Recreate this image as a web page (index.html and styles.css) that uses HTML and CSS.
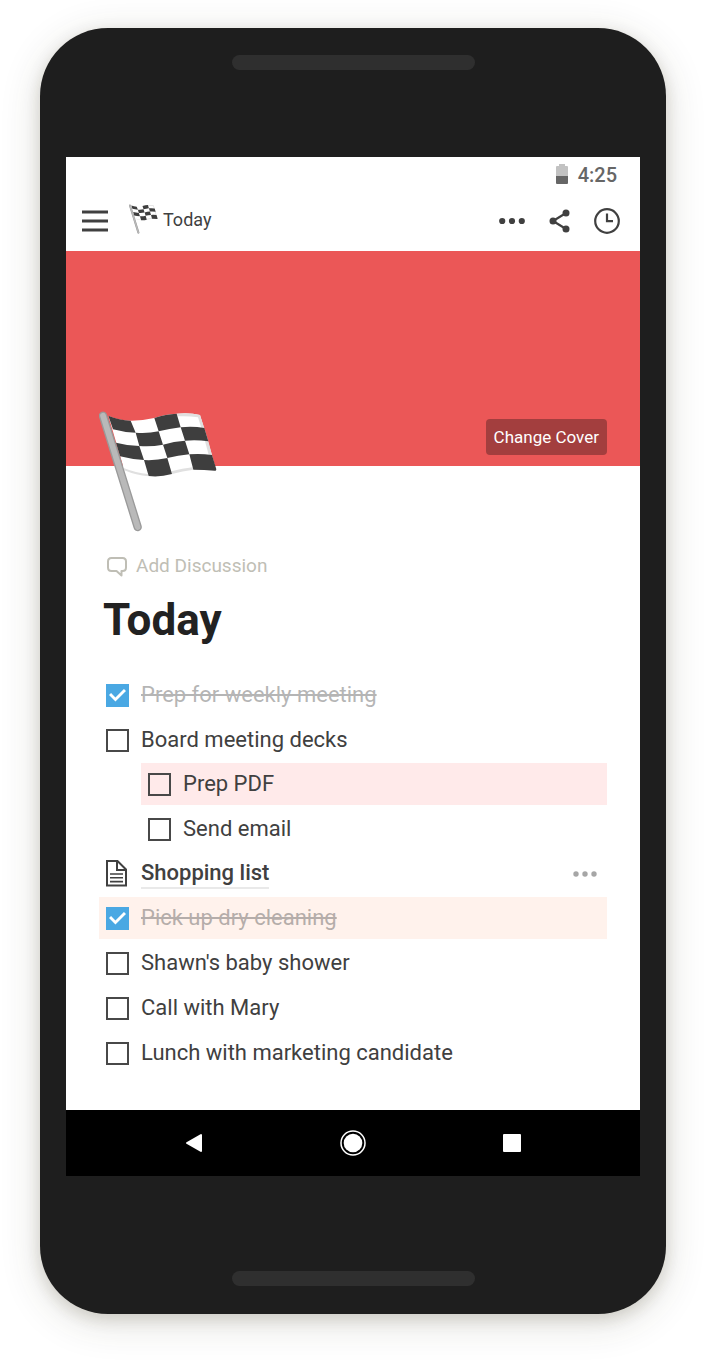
FILE: index.html
```html
<!DOCTYPE html>
<html lang="en">
<head>
<meta charset="utf-8">
<meta name="viewport" content="width=device-width, initial-scale=1">
<title>Today</title>
<link rel="stylesheet" href="styles.css">
</head>
<body>
<svg class="sprite" aria-hidden="true">
  <symbol id="flag" viewBox="39 30 357 366">
    <path fill="#fff" d="M67 47Q100 62 137 62Q170 62 205 54Q240 42 272 41Q312 37 342 45Q374 150 391 212Q355 207 322 209Q290 213 258 222Q222 232 188 228Q150 224 115 211Z"/>
    <path fill="#e0e0e0" d="M272 41Q312 37 342 45L355 84L346 84L336 52Q305 47 275 49ZM355 84L367 124L378 165L368 164L357 124ZM113 204Q150 219 186 222L188 229Q150 226 115 211ZM256 214Q290 205 320 202L322 209Q290 213 258 222Z"/>
    <g fill="#3e3e3e">
      <path d="M67 47Q100 60 134 62L149 98Q112 97 81 88Z"/>
      <path d="M205 54Q240 42 272 41L284 82Q250 86 218 94Z"/>
      <path d="M149 98Q184 101 218 94L231 134Q195 141 160 138Z"/>
      <path d="M284 82Q320 78 355 84L367 124Q330 118 297 122Z"/>
      <path d="M90 128Q124 137 160 138L174 180Q136 178 102 169Z"/>
      <path d="M231 134Q264 124 297 122L310 163Q276 166 244 174Z"/>
      <path d="M174 180Q210 182 244 174L258 222Q222 232 188 228Z"/>
      <path d="M310 163Q344 160 378 165L391 208Q390 214 386 212Q355 209 322 209Z"/>
    </g>
    <path fill="none" stroke="#9a9a9a" stroke-width="25" stroke-linecap="round" d="M51 47L155 381"/>
    <path fill="none" stroke="#b9b9b9" stroke-width="17" stroke-linecap="round" d="M51 47L155 381"/>
  </symbol>
</svg>
<main class="phone">
  <div class="speaker"></div>
  <div class="screen">
    <div class="status">
      <svg width="12" height="21" viewBox="0 0 12 21" aria-hidden="true"><path fill="#c2c2c2" d="M3 0H9V2H11Q12 2 12 3V12H0V3Q0 2 1 2H3Z"/><path fill="#666" d="M0 12H12V19Q12 20 11 20H1Q0 20 0 19Z"/></svg>
      <time>4:25</time>
    </div>
    <header class="topbar">
      <button class="icon-button" aria-label="Menu"><svg width="26" height="22" viewBox="0 0 26 22"><path stroke="#404040" stroke-width="2.8" d="M0 2H26M0 11H26M0 20H26"/></svg></button>
      <div class="crumb"><svg class="crumb-flag" aria-hidden="true"><use href="#flag"/></svg><span class="crumb-text">Today</span></div>
      <div class="actions">
        <button class="icon-button" aria-label="More"><svg width="26" height="8" viewBox="0 0 26 8" fill="#404040"><circle cx="3.2" cy="4" r="3.1"/><circle cx="13" cy="4" r="3.1"/><circle cx="22.8" cy="4" r="3.1"/></svg></button>
        <button class="icon-button" aria-label="Share"><svg width="21" height="24" viewBox="0 0 21 24" fill="#404040"><path fill="none" stroke="#404040" stroke-width="2.2" d="M17 4L4 12L17 20"/><circle cx="17" cy="4" r="3.5"/><circle cx="4" cy="12" r="3.5"/><circle cx="17" cy="20" r="3.5"/></svg></button>
        <button class="icon-button" aria-label="Updates"><svg width="26" height="26" viewBox="0 0 26 26" fill="none" stroke="#404040" stroke-width="2.2"><circle cx="13" cy="13" r="11.8"/><path d="M13 5.5V13.2H19"/></svg></button>
      </div>
    </header>
    <div class="cover"><button class="change-cover">Change Cover</button></div>
    <article class="page">
      <svg class="page-flag" aria-hidden="true"><use href="#flag"/></svg>
      <button class="discussion"><svg width="22" height="22" viewBox="0 0 22 22" fill="none" stroke="#bfbeb5" stroke-width="2" stroke-linejoin="round" aria-hidden="true"><path d="M5.500 3H16.500Q20 3 20 6.500V12.500Q20 16 16.500 16H15.500V20.500L10.500 16H5.500Q2 16 2 12.500V6.500Q2 3 5.500 3Z"/></svg>Add Discussion</button>
      <h1 class="title">Today</h1>
      <ul class="list">
        <li><label class="row"><input type="checkbox" class="box" checked><span class="text">Prep for weekly meeting</span></label></li>
        <li><label class="row"><input type="checkbox" class="box"><span class="text">Board meeting decks</span></label>
          <ul class="list nested">
            <li><label class="row pink"><input type="checkbox" class="box"><span class="text">Prep PDF</span></label></li>
            <li><label class="row"><input type="checkbox" class="box"><span class="text">Send email</span></label></li>
          </ul>
        </li>
        <li class="row page-row">
          <svg width="23" height="27" viewBox="0 0 23 27" fill="none" stroke="#404040" stroke-width="2" aria-hidden="true"><path d="M1 1H11.500L20 9.500V25.500H1Z"/><path d="M11 1V10H20"/><path stroke-width="1.600" d="M4 14H17M4 17.800H17M4 21.600H17"/></svg>
          <a class="page-link" href="#shopping">Shopping list</a>
          <button class="icon-button row-more" aria-label="Shopping list options"><svg width="24" height="6" viewBox="0 0 24 6" fill="#a6a6a6"><circle cx="3" cy="3" r="2.700"/><circle cx="12" cy="3" r="2.700"/><circle cx="21" cy="3" r="2.700"/></svg></button>
        </li>
        <li><label class="row peach"><input type="checkbox" class="box" checked><span class="text">Pick up dry cleaning</span></label></li>
        <li><label class="row"><input type="checkbox" class="box"><span class="text">Shawn's baby shower</span></label></li>
        <li><label class="row"><input type="checkbox" class="box"><span class="text">Call with Mary</span></label></li>
        <li><label class="row"><input type="checkbox" class="box"><span class="text">Lunch with marketing candidate</span></label></li>
      </ul>
    </article>
    <nav class="navbar">
      <button class="icon-button" aria-label="Back"><svg width="18" height="20" viewBox="0 0 18 20"><path fill="#fff" stroke="#fff" stroke-linejoin="round" stroke-width="2" d="M16 2V18L2 10Z"/></svg></button>
      <button class="icon-button" aria-label="Home"><svg width="26" height="26" viewBox="0 0 26 26"><circle cx="13" cy="13" r="12" fill="none" stroke="#fff" stroke-width="1.500"/><circle cx="13" cy="13" r="9.300" fill="#fff"/></svg></button>
      <button class="icon-button" aria-label="Recent apps"><svg width="18" height="18" viewBox="0 0 18 18"><rect width="18" height="18" rx="1" fill="#fff"/></svg></button>
    </nav>
  </div>
  <div class="speaker"></div>
</main>
</body>
</html>
```

FILE: styles.css
```css
* { box-sizing: border-box; }
body {
  margin: 0;
  padding: 28px 40px 52px;
  background: #fff;
  color: #404040;
  font-family: Roboto, "Liberation Sans", sans-serif;
}
svg { display: block; flex: none; }
button { font: inherit; cursor: pointer; }
.sprite { display: none; }
.phone {
  display: flex;
  flex-direction: column;
  align-items: center;
  padding: 27px 26px 28px;
  border-radius: 68px;
  background: #1e1e1e;
  box-shadow: 0 8px 40px rgba(55, 53, 30, 0.16), 0 5px 16px rgba(55, 45, 15, 0.16);
}
.speaker {
  width: 243px;
  max-width: 60%;
  height: 15px;
  border-radius: 8px;
  background: #2f2f2f;
}
.screen {
  align-self: stretch;
  margin: 87px 0 95px;
  background: #fff;
}
.icon-button {
  display: flex;
  padding: 0;
  border: 0;
  background: none;
}
.status {
  display: flex;
  justify-content: flex-end;
  align-items: center;
  gap: 10px;
  height: 35px;
  padding: 0 23px;
  color: #666;
  font-size: 20px;
  font-weight: 500;
}
.topbar {
  display: flex;
  align-items: center;
  height: 59px;
  padding: 0 20px 2px 16px;
}
.crumb {
  display: flex;
  align-items: center;
  gap: 5px;
  margin-left: 21px;
  padding-bottom: 3px;
  font-size: 18px;
}
.crumb-flag { width: 29px; height: 30px; }
.actions {
  display: flex;
  align-items: center;
  gap: 24px;
  margin-left: auto;
}
.cover {
  display: flex;
  justify-content: flex-end;
  align-items: flex-end;
  height: 215px;
  padding: 11px 33px;
  background: #eb5757;
}
.change-cover {
  padding: 8px;
  border: 0;
  border-radius: 4px;
  background: #a33e3e;
  color: #fff;
  font-size: 17px;
  line-height: 20px;
}
.page { padding: 0 33px 36px; }
.page-flag {
  position: relative;
  width: 119px;
  height: 122px;
  margin-top: -56px;
}
.discussion {
  display: flex;
  align-items: center;
  gap: 8px;
  margin-top: 22px;
  padding: 0 7px;
  border: 0;
  background: none;
  color: #bfbeb5;
  font-size: 19px;
  line-height: 24px;
}
.title {
  margin: 16px 4px 28px;
  color: #222;
  font-size: 44px;
  font-weight: 700;
  line-height: 52px;
}
.list {
  display: flex;
  flex-direction: column;
  gap: 3px;
  margin: 0;
  padding: 0;
  list-style: none;
}
.nested { margin: 2px 0 0 42px; }
.row {
  display: flex;
  align-items: center;
  gap: 12px;
  height: 42px;
  padding: 0 10px 0 7px;
  font-size: 22px;
  line-height: 28px;
}
.page-row { height: 41px; }
.pink { background: #ffeaea; }
.peach { background: #fff2ec; }
.box {
  display: grid;
  place-items: center;
  flex: none;
  width: 23px;
  height: 23px;
  margin: 0;
  border: 2px solid #484848;
  appearance: none;
}
.box:checked {
  border-color: #4aa8e3;
  background: #4aa8e3;
}
.box:checked::before {
  content: "";
  width: 17px;
  height: 13px;
  background: #fff;
  clip-path: polygon(0 50%, 12% 35%, 38% 69%, 88% 4%, 100% 19%, 38% 100%);
}
.box:checked + .text {
  opacity: 0.38;
  text-decoration: line-through;
}
.page-link {
  border-bottom: 2px solid #e9e9e9;
  color: #404040;
  font-weight: 500;
  text-decoration: none;
}
.row-more { margin-left: auto; }
.navbar {
  display: flex;
  justify-content: space-around;
  align-items: center;
  height: 66px;
  padding: 0 50px;
  background: #000;
}
```
